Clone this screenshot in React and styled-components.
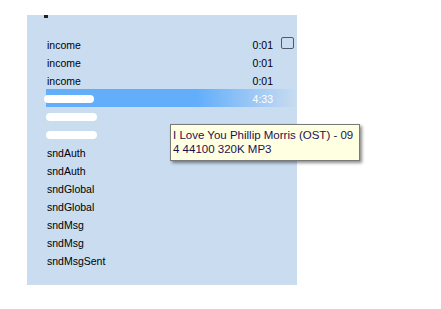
import React from 'react'
import styled, { createGlobalStyle } from 'styled-components'

const GlobalStyle = createGlobalStyle`
    html, body {
        margin : 0;
        padding : 0;
        background : #FFF;
    }
    body {
        font-family : "Liberation Sans", Arial, sans-serif;
    }
`

const tracks = [
    { id : 1, name : 'income', time : '0:01', check : true },
    { id : 2, name : 'income', time : '0:01' },
    { id : 3, name : 'income', time : '0:01' },
    { id : 4, name : 'redacted', time : '4:33', active : true, hidden : true },
    { id : 5, name : 'redacted', hidden : true },
    { id : 6, name : 'redacted', hidden : true },
    { id : 7, name : 'sndAuth' },
    { id : 8, name : 'sndAuth' },
    { id : 9, name : 'sndGlobal' },
    { id : 10, name : 'sndGlobal' },
    { id : 11, name : 'sndMsg' },
    { id : 12, name : 'sndMsg' },
    { id : 13, name : 'sndMsgSent' },
]

function App() {
    return (
        <Page>
            <GlobalStyle />
            <Panel>
                <Marker />
                <List>
                    {tracks.map(({ id, name, time, check, active, hidden }) => {
                        return (
                            <Row key={id} $active={active}>
                                <Name>
                                    {hidden ? <Smudge $wide={active ? 50 : 51} $shift={active ? -3 : -1} /> : name}
                                </Name>
                                <Time $active={active}>{time}</Time>
                                <CheckSlot>{check && <Check />}</CheckSlot>
                            </Row>
                        )
                    })}
                </List>
                <Tooltip>
                    <div>I Love You Phillip Morris (OST) - 09</div>
                    <div>4 44100 320K MP3</div>
                </Tooltip>
            </Panel>
        </Page>
    )
}

export default App

const Page = styled.div`
    padding : 15px 0 0 27px;
`

const Panel = styled.div`
    position : relative;
    width : 270px;
    height : 270px;
    background-color : #C9DCF0;
`

const Marker = styled.div`
    width : 4px;
    height : 3px;
    margin-left : 17px;
    background-color : #222;
`

const List = styled.div`
    display : flex;
    flex-direction : column;
    margin-top : 17px;
    padding-left : 19px;
`

const Row = styled.div`
    height : 18px;
    display : grid;
    grid-template-columns : 1fr auto 24px;
    align-items : center;
    padding : 1px 0 0 1px;
    box-sizing : border-box;
    font-size : 10.5px;
    color : #000;
    background : ${p => p.$active
        ? 'linear-gradient(to right, #62AEFB 0%, #62AEFB 60%, #C9DCF0 100%)'
        : 'transparent'};
`

const Name = styled.div`
    display : flex;
    align-items : center;
`

const Smudge = styled.span`
    display : inline-block;
    width : ${p => p.$wide}px;
    height : 8px;
    margin-left : ${p => p.$shift}px;
    border-radius : 5px;
    background-color : #FFF;
    filter : blur(0.6px);
`

const Time = styled.div`
    text-align : right;
    color : ${p => p.$active ? '#FFF' : '#000'};
`

const CheckSlot = styled.div`
    display : flex;
    justify-content : flex-end;
    padding-right : 3px;
`

const Check = styled.div`
    width : 11px;
    height : 10px;
    border : 1px solid #4D5A6A;
    border-radius : 2px;
    margin-top : -3px;
`

const Tooltip = styled.div`
    position : absolute;
    left : 143px;
    top : 109px;
    width : 184px;
    padding : 3px 2px 4px 2px;
    background-color : #FFFFE1;
    border : 1px solid #7A7A7A;
    box-shadow : 2px 2px 3px rgba(0, 0, 0, 0.45);
    font-size : 11.5px;
    line-height : 14px;
    color : #1E1050;
    white-space : nowrap;
`
